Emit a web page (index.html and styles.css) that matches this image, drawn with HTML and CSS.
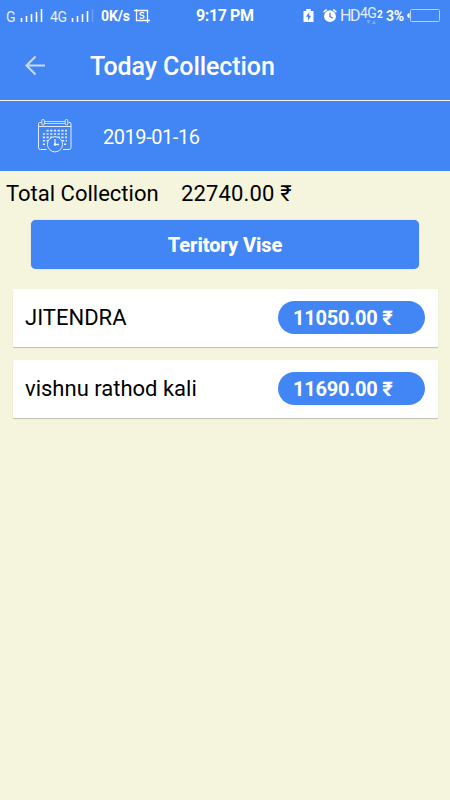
FILE: index.html
```html
<!DOCTYPE html>
<html lang="en">
<head>
  <meta charset="utf-8" />
  <title>Today Collection</title>
  <link rel="stylesheet" href="styles.css">
</head>
<body>
  <!-- Phone status bar -->
  <div class="status-bar">
    <span class="net sim1">G</span>
    <svg class="signal" width="24" height="14" viewBox="0 0 24 14">
      <path d="M1.5 13V9M6.5 13V7M11.5 13V5M16.5 13V3M21.5 13V0" />
    </svg>
    <span class="net sim2">4G</span>
    <svg class="signal" width="24" height="14" viewBox="0 0 24 14">
      <path d="M1.5 13V9M6.5 13V7M11.5 13V5M16.5 13V2" />
      <path class="dim" d="M21.5 13V0" />
    </svg>
    <span class="speed">0K/s</span>
    <svg class="shot" width="16" height="16" viewBox="0 0 16 16">
      <path d="M0 2.5H13.5V15M2.5 1V12.5H16" />
      <path d="M10 5.2C9 4.1 6 4.2 6 5.9C6 7.8 10 6.7 10 8.7C10 10.7 6.8 10.7 5.7 9.5" />
    </svg>
    <span class="time">9:17 PM</span>
    <svg class="charge" width="11" height="14" viewBox="0 0 11 14">
      <path d="M0.5 2H3.2V0H7.8V2H10.5V13H0.5Z" fill="#fff" />
      <path d="M6.2 3.2L2.9 7.8H5V11.6L8.2 6.8H6.2Z" fill="#4285f4" />
    </svg>
    <svg class="alarm" width="14" height="14" viewBox="0 0 14 14">
      <circle cx="7" cy="7.2" r="5.9" fill="#fff" />
      <path d="M7 3.8V7.6L9.7 9.1" fill="none" stroke="#4285f4" stroke-width="1.3" />
      <path d="M0.6 3.1L3.7 0.4M13.4 3.1L10.3 0.4" stroke="#fff" stroke-width="1.4" />
    </svg>
    <span class="hd">HD</span>
    <div class="data">
      <span class="data-type">4G</span>
      <svg width="11" height="4" viewBox="0 0 11 4">
        <path d="M0.5 0H4.5L2.5 4ZM6 4H10L8 0Z" fill="#7aa9f8" />
      </svg>
    </div>
    <span class="sim-no">2</span>
    <span class="percent">3%</span>
    <svg class="battery" width="34" height="14" viewBox="0 0 34 14">
      <path d="M2.6 4Q0.2 4 0.2 6.5Q0.2 9 2.6 9Z" fill="#fff" />
      <rect x="3.5" y="0.5" width="29" height="12" rx="1" fill="none" stroke="#b9d2fc" />
    </svg>
  </div>

  <div class="toolbar">
    <svg class="back" width="22" height="22" viewBox="0 0 22 22">
      <path d="M21 10.5H2.5M11.5 1.5L2.5 10.5L11.5 19.5" />
    </svg>
    <h1>Today Collection</h1>
  </div>

  <div class="date-bar">
    <svg class="calendar" width="36" height="36" viewBox="0 0 36 36">
      <path d="M4 4.5H2.6Q1.5 4.5 1.5 6V29.5Q1.5 31.5 3.5 31.5H9.5M26 31.5H32Q34 31.5 34 29.5V6Q34 4.5 33 4.5H31.5M1.5 8.5H34" />
      <path d="M7.5 3.5H28M7.5 5.5H28" stroke-width="0.8" />
      <rect x="4.8" y="1.5" width="2.6" height="5.5" rx="1.2" />
      <rect x="28.2" y="1.5" width="2.6" height="5.5" rx="1.2" />
      <path class="days" d="M9.5 12.6H30M5.8 16H30M5.8 19.4H30M5.8 22.8H11M25 22.8H30M5.8 26.2H9M27 26.2H30" />
      <circle cx="18" cy="26.3" r="7.6" fill="#4285f4" />
      <path d="M18 21V26.5H22" stroke-width="1.3" />
      <circle cx="18" cy="26.5" r="1.2" fill="#fff" stroke="none" />
    </svg>
    <span class="date">2019-01-16</span>
  </div>

  <div class="total">
    <span class="total-label">Total Collection</span>
    <span class="total-amount">22740.00 ₹</span>
  </div>

  <button type="button" class="territory-btn">Teritory Vise</button>

  <div class="list">
    <div class="card">
      <span class="name">JITENDRA</span>
      <span class="amount">11050.00 ₹</span>
    </div>
    <div class="card">
      <span class="name">vishnu rathod kali</span>
      <span class="amount">11690.00 ₹</span>
    </div>
  </div>
</body>
</html>
```

FILE: styles.css
```css
body {
  margin: 0;
  min-height: 800px;
  font-family: Roboto, sans-serif;
  background-color: #f5f4dc;
  color: #000;
}
svg {
  display: block;
  flex: none;
}

/* Status bar */
.status-bar {
  display: flex;
  align-items: center;
  height: 32px;
  background-color: #4285f4;
  color: #fff;
  white-space: nowrap;
  line-height: 16px;
}
.status-bar span {
  flex: none;
}
.net {
  padding-top: 2px;
  font-size: 14px;
  font-weight: 400;
  letter-spacing: -0.3px;
  color: #e6effe;
}
.sim1 {
  width: 14px;
  margin-left: 6px;
}
.sim2 {
  width: 21px;
  margin-left: 6px;
}
.signal path {
  stroke: #fff;
  stroke-width: 1.6;
}
.signal .dim {
  stroke: #6b9ff7;
}
.speed {
  width: 33px;
  margin-left: 6px;
  font-size: 14px;
  font-weight: 700;
  letter-spacing: -0.1px;
}
.shot path {
  fill: none;
  stroke: #fff;
  stroke-width: 1.3;
}
.time {
  width: 107px;
  margin-left: 46px;
  font-size: 16px;
  font-weight: 700;
  letter-spacing: -0.4px;
}
.alarm {
  margin-left: 9px;
}
.hd {
  width: 20px;
  margin-left: 3px;
  font-size: 16px;
  font-weight: 400;
  letter-spacing: -1.5px;
  color: #e6effe;
}
.data {
  width: 17px;
  height: 18px;
}
.data-type {
  display: block;
  height: 13px;
  line-height: 13px;
  font-size: 14px;
  font-weight: 400;
  letter-spacing: -0.6px;
  color: #e6effe;
}
.data svg {
  margin-left: 6px;
}
.sim-no {
  width: 9px;
  margin-top: -2px;
  font-size: 10px;
  font-weight: 700;
}
.percent {
  width: 21px;
  font-size: 14px;
  font-weight: 700;
  letter-spacing: -0.3px;
}

/* Header */
.toolbar {
  display: flex;
  align-items: center;
  height: 68px;
  padding-left: 24px;
  background-color: #4285f4;
  color: #fff;
  border-bottom: 1px solid #f5f4dc;
}
.back path {
  fill: none;
  stroke: #c3d8fc;
  stroke-width: 2.2;
}
.toolbar h1 {
  margin: 0 0 0 44px;
  font-size: 25px;
  font-weight: 500;
  letter-spacing: -0.08px;
}
.date-bar {
  display: flex;
  align-items: center;
  height: 70px;
  padding-left: 37px;
  background-color: #4285f4;
  color: #fff;
}
.date {
  padding-top: 2px;
  font-size: 20px;
  letter-spacing: -0.45px;
}
.calendar {
  margin-right: 30px;
  fill: none;
  stroke: #e3edfe;
}
.calendar .days {
  stroke-width: 1.6;
  stroke-dasharray: 2.2 1.5;
}

/* Content */
.total {
  display: flex;
  align-items: center;
  height: 44px;
  padding-left: 6px;
  font-size: 22px;
}
.total-label {
  width: 175px;
}
.total-amount {
  letter-spacing: 0.15px;
}
.territory-btn {
  display: block;
  width: 388px;
  height: 49px;
  margin: 5px auto 0;
  padding: 1px 0 0;
  border: none;
  border-radius: 5px;
  background-color: #4285f4;
  box-shadow: 0 0 1px #7c8ea8;
  color: #fff;
  font-family: inherit;
  font-size: 20px;
  font-weight: 800;
  letter-spacing: -0.1px;
}
.list {
  display: flex;
  flex-direction: column;
  gap: 13px;
  padding: 19.5px 12.5px 0;
}
.card {
  display: flex;
  align-items: center;
  justify-content: space-between;
  height: 58px;
  padding: 0 12.5px;
  border-radius: 1px;
  background-color: #fff;
  box-shadow: 0 1px 1px #bfbfad;
}
.name {
  font-size: 22px;
}
.amount {
  box-sizing: border-box;
  width: 147px;
  height: 33px;
  padding-left: 15px;
  border-radius: 17px;
  background-color: #4285f4;
  color: #fff;
  font-size: 20px;
  font-weight: 700;
  letter-spacing: -0.2px;
  line-height: 35px;
}
```
